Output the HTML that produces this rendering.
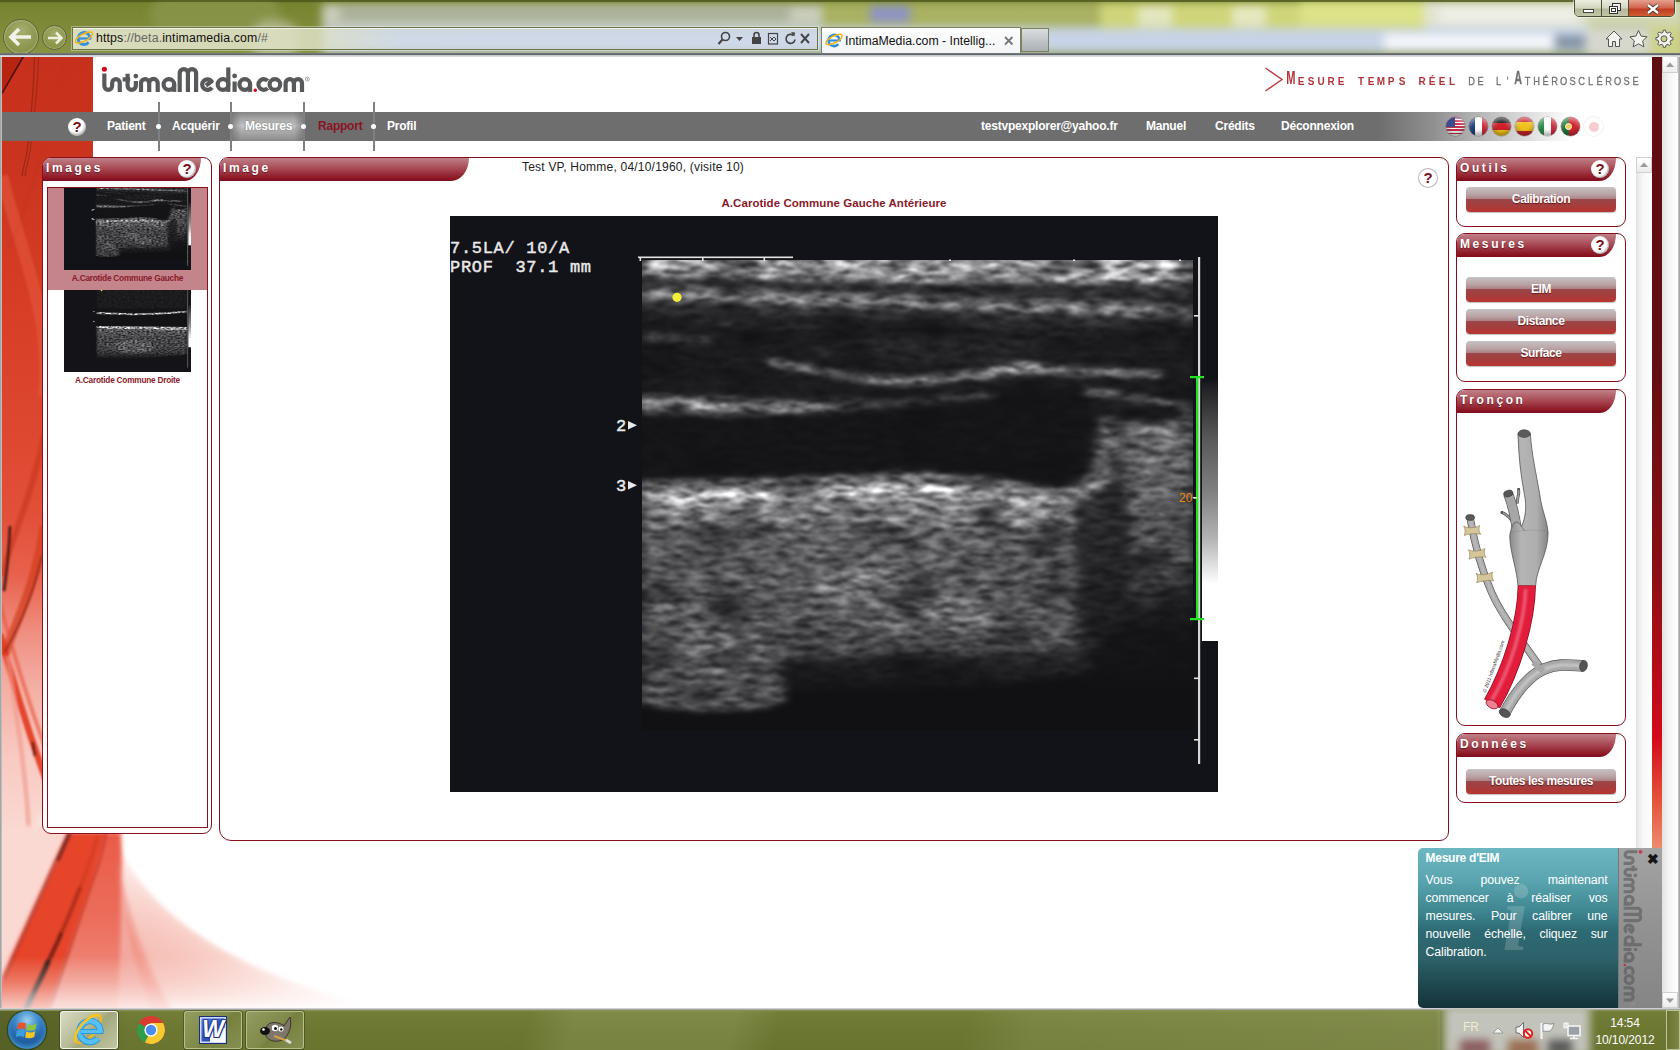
<!DOCTYPE html>
<html><head><meta charset="utf-8"><title>IntimaMedia.com</title>
<style>
*{box-sizing:border-box;margin:0;padding:0}
html,body{width:1680px;height:1050px;overflow:hidden;background:#fff;font-family:"Liberation Sans",sans-serif;}
.abs{position:absolute}
#chrome{position:absolute;left:0;top:0;width:1680px;height:57px;z-index:5;overflow:hidden;background:#7d8838}
#page{position:absolute;left:2px;top:56px;width:1660px;height:952px;overflow:hidden;background:#fff}
#taskbar{position:absolute;left:0;top:1008px;width:1680px;height:42px;overflow:hidden;background:#6b7530}
/* panels */
.panel{position:absolute;border:1.2px solid #86101c;border-radius:9px;background:#fff}
.phead{position:absolute;left:0;top:0;height:23px;background:linear-gradient(#bf8188 0%,#a84a55 45%,#8a1422 90%,#7e0f1c 100%);border-radius:8px 0 16px 0/8px 0 23px 0;color:#fff;font-weight:bold;font-size:12px;letter-spacing:2.6px;line-height:20px;padding-left:3px;text-shadow:0 1px 1px rgba(60,0,0,.5)}
.help{position:absolute;width:18px;height:18px;border-radius:50%;background:#fff;box-shadow:inset -1px -1px 2px rgba(0,0,0,.35);color:#7d0c16;font-weight:bold;font-size:15px;line-height:18px;text-align:center;letter-spacing:0;text-shadow:none}
.btn{position:absolute;left:9px;width:150px;height:25px;border-radius:4px;background:linear-gradient(#c6c2c2 0%,#b9a3a5 30%,#ab7e82 49%,#9a4648 50%,#a63d3d 75%,#b93430 100%);color:#fff;font-weight:bold;font-size:12px;line-height:25px;text-align:center;letter-spacing:-.4px;text-shadow:0 1px 1px rgba(60,0,0,.6);box-shadow:0 1px 1px rgba(0,0,0,.25)}
.nav{position:absolute;top:0;color:#fff;font-weight:bold;font-size:12px;line-height:29px;white-space:nowrap;letter-spacing:-.22px}
.flag{position:absolute;top:1.2px;width:19px;height:19px;margin-left:.5px;border-radius:50%;overflow:hidden;box-shadow:inset 0 -3px 4px rgba(0,0,0,.35),inset 0 3px 4px rgba(255,255,255,.5),0 0 0 .5px rgba(0,0,0,.3)}
.tl{left:0;width:159px;text-align:center;font-size:8.3px;font-weight:bold;color:#8a1a2a;line-height:12px;white-space:nowrap;letter-spacing:-.25px}
#tag i{display:inline-block;text-align:center;font-style:normal;height:24px;vertical-align:top;overflow:visible}
#tag i.bg{font-size:17.9px;line-height:19.5px;font-weight:bold}
</style></head><body>

<!-- ================= BROWSER CHROME ================= -->
<div id="chrome">
<div class="abs" style="left:0;top:0;width:1680px;height:56px;background:linear-gradient(#5f6a24 0,#77842f 4px,#7f8a38 26px,#8a9446 56px)"></div>
<!-- blurred stuff behind glass -->
<div class="abs" style="left:0;top:0;width:1680px;height:56px;filter:blur(5px)">
 <div class="abs" style="left:150px;top:-6px;width:130px;height:40px;background:#8c9850;opacity:.7;border-radius:20px"></div>
 <div class="abs" style="left:250px;top:20px;width:50px;height:40px;background:#d8d8cc;opacity:.5;border-radius:20px"></div>
 <div class="abs" style="left:322px;top:4px;width:500px;height:22px;background:#c9cdbb"></div>
 <div class="abs" style="left:340px;top:8px;width:450px;height:12px;background:#9ea58e;opacity:.8"></div>
 <div class="abs" style="left:322px;top:27px;width:1270px;height:26px;background:#c7d3e6"></div>
 <div class="abs" style="left:822px;top:2px;width:300px;height:25px;background:#a9b162"></div>
 <div class="abs" style="left:1100px;top:2px;width:330px;height:26px;background:#cfd57a"></div><div class="abs" style="left:1300px;top:0px;width:130px;height:26px;background:#dce288"></div><div class="abs" style="left:1424px;top:0px;width:166px;height:27px;background:#e2e4d2"></div>
 <div class="abs" style="left:1232px;top:6px;width:34px;height:20px;background:#e6e8c0"></div>
 <div class="abs" style="left:1440px;top:7px;width:135px;height:16px;background:#eeefe6"></div>
 <div class="abs" style="left:870px;top:6px;width:40px;height:16px;background:#8d93c8"></div>
 <div class="abs" style="left:1138px;top:6px;width:34px;height:20px;background:#e3e6c0"></div>
 <div class="abs" style="left:1586px;top:27px;width:66px;height:30px;background:#d6d8ce"></div><div class="abs" style="left:1650px;top:20px;width:36px;height:40px;background:#ccd18a"></div><div class="abs" style="left:1586px;top:-4px;width:100px;height:30px;background:#d3d7b4"></div>
 <div class="abs" style="left:1384px;top:34px;width:170px;height:16px;background:#f4f6fa"></div>
 <div class="abs" style="left:1555px;top:36px;width:30px;height:12px;background:#7e8ea0"></div>
</div>
<div class="abs" style="left:0;top:0;width:1680px;height:1.500px;background:#4d571c;opacity:.8"></div>
<!-- nav buttons -->
<div class="abs" style="left:3px;top:19px;width:36px;height:36px;border-radius:50%;border:1.5px solid #5d6436;background:radial-gradient(circle at 50% 30%,rgba(230,235,200,.38),rgba(150,160,100,.2) 70%);box-shadow:inset 0 0 2px rgba(255,255,255,.8)"></div>
<div class="abs" style="left:42px;top:25px;width:25px;height:25px;border-radius:50%;border:1.5px solid #5d6436;background:radial-gradient(circle at 50% 30%,rgba(230,235,200,.34),rgba(150,160,100,.18) 70%);box-shadow:inset 0 0 2px rgba(255,255,255,.8)"></div>
<svg class="abs" style="left:8px;top:27px" width="26" height="20" viewBox="0 0 26 20"><path d="M11 2L3 10l8 8M3.5 10H23" fill="none" stroke="#f2f2ea" stroke-width="3.6" stroke-linejoin="miter"/></svg>
<svg class="abs" style="left:46px;top:31px" width="18" height="14" viewBox="0 0 18 14"><path d="M10 1.5L15.5 7 10 12.5M15 7H2" fill="none" stroke="#eef0e0" stroke-width="2.6"/></svg>
<!-- address bar -->
<div class="abs" style="left:72px;top:27px;width:746px;height:23px;border:1px solid #6b7446;background:linear-gradient(90deg,rgba(226,228,200,.92) 0,rgba(222,225,196,.85) 240px,rgba(214,222,232,.55) 330px,rgba(214,222,236,.5) 100%);box-shadow:inset 0 1px 0 rgba(255,255,255,.7),0 0 0 1px rgba(255,255,255,.35)"></div>
<svg class="abs" style="left:75px;top:29px" width="18" height="18" viewBox="0 0 18 18"><path d="M15 9.500A6 6 0 1 0 13.600 13.400" fill="none" stroke="#2d8fe0" stroke-width="2.800"/><path d="M3.500 9.500H16.300" stroke="#2d8fe0" stroke-width="2.200"/><ellipse cx="9" cy="8.5" rx="9.5" ry="3.6" transform="rotate(-28 9 8.5)" fill="none" stroke="#f2b41c" stroke-width="1.6"/></svg>
<div class="abs" style="left:96px;top:30px;font-size:12.3px;line-height:16px;color:#111;white-space:nowrap;letter-spacing:.15px">https<span style="color:#666">://beta.</span>intimamedia.com<span style="color:#666">/#</span></div>
<!-- address bar icons -->
<svg class="abs" style="left:716px;top:29px" width="100" height="18" viewBox="0 0 100 18" fill="none" stroke="#444" stroke-width="1.6">
 <circle cx="9.5" cy="7.5" r="4"/><path d="M6.5 10.5L2.5 15" stroke-width="2.2"/>
 <path d="M20 8h7l-3.5 4z" fill="#444" stroke="none"/>
 <rect x="36" y="8" width="9" height="7" fill="#444" stroke="none"/><path d="M38 8V6a2.5 2.5 0 0 1 5 0v2"/>
 <rect x="52.5" y="4.500" width="9" height="10.500" stroke-width="1.200"/><path d="M54 8l2 2 2-2 2 2M54 12l2-2 2 2 2-2" stroke-width="1"/>
 <path d="M77.500 6.500a4.500 4.500 0 1 0 1.500 4" stroke-width="1.700"/><path d="M75 3l4 .5-.5 4z" fill="#444" stroke="none"/>
 <path d="M85 5l8 9M93 5l-8 9" stroke-width="1.900"/>
</svg>
<!-- tab -->
<div class="abs" style="left:821px;top:27px;width:200px;height:27px;border:1px solid #7b8260;border-bottom:none;background:linear-gradient(#fdfdfd,#f2f4f6)"></div>
<svg class="abs" style="left:825px;top:31px" width="18" height="18" viewBox="0 0 18 18"><path d="M14.600 9.500A5.600 5.600 0 1 0 13.300 13.100" fill="none" stroke="#2d8fe0" stroke-width="2.600"/><path d="M3.800 9.500H15.800" stroke="#2d8fe0" stroke-width="2.100"/><ellipse cx="9" cy="8.500" rx="9" ry="3.400" transform="rotate(-28 9 8.500)" fill="none" stroke="#f2b41c" stroke-width="1.500"/></svg>
<div class="abs" style="left:845px;top:33px;font-size:12.3px;line-height:16px;color:#111;white-space:nowrap;letter-spacing:0">IntimaMedia.com - Intellig...</div>
<svg class="abs" style="left:1003px;top:35px" width="12" height="12" viewBox="0 0 12 12"><path d="M2 2l7.500 7.500M9.500 2L2 9.500" stroke="#777" stroke-width="1.800"/></svg>
<div class="abs" style="left:1021px;top:28px;width:28px;height:24px;border:1px solid #7b8260;background:linear-gradient(#d9dde0,#aab0b4)"></div>
<!-- window buttons -->
<div class="abs" style="left:1574px;top:-1px;width:101px;height:18px;border:1px solid #4a4f30;border-radius:0 0 5px 5px;overflow:hidden;box-shadow:0 0 0 1px rgba(255,255,255,.5)">
 <div class="abs" style="left:0;top:0;width:27px;height:18px;background:linear-gradient(#eceee0,#d2d6be 45%,#b4b898 50%,#c6caae);border-right:1px solid #4a4f30"></div>
 <div class="abs" style="left:27px;top:0;width:27px;height:18px;background:linear-gradient(#eceee0,#d2d6be 45%,#b4b898 50%,#c6caae);border-right:1px solid #4a4f30"></div>
 <div class="abs" style="left:54px;top:0;width:47px;height:18px;background:linear-gradient(#e6a090,#d1614a 45%,#c03a20 50%,#d4683a)"></div>
 <div class="abs" style="left:8px;top:9px;width:11px;height:4px;background:#fff;border:1px solid #444"></div>
 <svg class="abs" style="left:33px;top:2px" width="14" height="13" viewBox="0 0 14 13" fill="none" stroke="#333" stroke-width="1"><rect x="4.500" y="1.500" width="8" height="7" fill="#eee"/><rect x="1.500" y="4.500" width="8" height="7" fill="#fff"/><rect x="3.500" y="6.500" width="4" height="3"/></svg>
 <svg class="abs" style="left:70px;top:3px" width="16" height="12" viewBox="0 0 16 12"><path d="M3 2l10 8M13 2L3 10" stroke="#333" stroke-width="4"/><path d="M3 2l10 8M13 2L3 10" stroke="#fff" stroke-width="2.400"/></svg>
</div>
<!-- home star gear -->
<svg class="abs" style="left:1602px;top:27px" width="76" height="24" viewBox="0 0 76 24" fill="#f4f4ee" stroke="#555" stroke-width="1">
 <path d="M4 12l8-8 8 8h-2.500v7.500h-4v-5h-3v5h-4V12z"/>
 <path d="M36.500 3.500l2.600 5.600 6 .7-4.500 4.100 1.300 6-5.400-3.100-5.400 3.100 1.300-6-4.500-4.100 6-.7z"/>
 <path d="M61.500 3l2 .2.500 2.200 1.800.8 1.900-1.200 1.500 1.500-1.200 1.900.8 1.800 2.200.5v2.100l-2.200.5-.8 1.800 1.200 1.900-1.500 1.500-1.900-1.200-1.800.8-.5 2.200h-2.100l-.5-2.200-1.800-.8-1.900 1.200-1.500-1.500 1.200-1.900-.8-1.800-2.200-.5v-2.100l2.200-.5.8-1.800-1.200-1.900 1.500-1.500 1.900 1.200 1.800-.8.500-2.200z"/><circle cx="62" cy="11.800" r="3" fill="#ccd18a"/>
</svg>
<div class="abs" style="left:0;top:53px;width:1680px;height:4px;background:linear-gradient(#7a8080,#5c6266 45%,#c4c8cc 55%,#e2e4e6)"></div>

</div>

<!-- ================= PAGE ================= -->
<div id="page">
<svg class="abs" style="left:0;top:0" width="460" height="952" viewBox="0 0 460 952">
 <defs>
  <linearGradient id="strip" x1="0" y1="0" x2="0" y2="1"><stop offset="0" stop-color="#c6301c"/><stop offset=".12" stop-color="#cb351f"/><stop offset=".25" stop-color="#d63d24"/><stop offset=".4" stop-color="#de4831"/><stop offset=".48" stop-color="#e2503a"/><stop offset=".54" stop-color="#e8614c"/><stop offset=".6" stop-color="#ef8f80"/><stop offset=".66" stop-color="#f4b0a5"/><stop offset=".73" stop-color="#f8cac2"/><stop offset=".81" stop-color="#fad9d2"/><stop offset="1" stop-color="#fbe6e1"/></linearGradient>
  <radialGradient id="fan" cx="0" cy="1" r="1" gradientTransform="translate(0 0)"><stop offset="0" stop-color="#f29c8e"/><stop offset=".5" stop-color="#f7c6bd"/><stop offset=".8" stop-color="#fdebe8"/><stop offset="1" stop-color="#fff"/></radialGradient>
  <linearGradient id="botfade" x1="0" y1="0" x2="0" y2="1"><stop offset="0" stop-color="#fff" stop-opacity="0"/><stop offset=".5" stop-color="#fff" stop-opacity=".28"/><stop offset="1" stop-color="#fff" stop-opacity=".72"/></linearGradient>
  <linearGradient id="rib2" x1="0" y1="0" x2="0" y2="1"><stop offset="0" stop-color="#ea5b47"/><stop offset=".5" stop-color="#ec6e5c"/><stop offset="1" stop-color="#f19a8e"/></linearGradient>
  <filter id="b2" x="-20%" y="-20%" width="140%" height="140%"><feGaussianBlur stdDeviation="2.2"/></filter>
  <filter id="b5" x="-20%" y="-20%" width="140%" height="140%"><feGaussianBlur stdDeviation="6"/></filter>
  <filter id="b15" x="-20%" y="-20%" width="140%" height="140%"><feGaussianBlur stdDeviation="1.500"/></filter>
  <filter id="b05" x="-20%" y="-20%" width="140%" height="140%"><feGaussianBlur stdDeviation=".5"/></filter>
  <filter id="b1" x="-20%" y="-20%" width="140%" height="140%"><feGaussianBlur stdDeviation="1"/></filter>
 </defs>
 <!-- base strip -->
 <rect x="0" y="0" width="91" height="960" fill="url(#strip)"/>
 <!-- white fan area bottom -->
 <path d="M91 700C96 800 160 900 400 952H91Z" fill="#fff"/>
 <path d="M40 760H111C125 820 180 900 380 952H40Z" fill="url(#fan)" filter="url(#b5)"/>
 <path d="M111 770C125 830 200 915 400 956H460V700H111Z" fill="#fff" filter="url(#b2)"/>
 <!-- top block streaks -->
 <path d="M0 0H21.700L0 37.400Z" fill="#b2200f" opacity=".75"/>
 <g filter="url(#b05)" fill="none">
  <path d="M21.700 0L0 37.400" stroke="#4a120a" stroke-width="1.500"/>
  <path d="M32.500 0C32 30 30 50 27 80S22 104 20 120" stroke="#a02616" stroke-width="1.300"/>
  <path d="M36.500 0C36 30 33 50 30 80S25 104 23 120" stroke="#a52a18" stroke-width="1.300"/>
 </g>
 <g filter="url(#b1)" fill="none">
  <path d="M62 0C60 40 40 110 8 190" stroke="#c2341e" stroke-width="2" opacity=".5"/>
  <path d="M0 120C20 200 50 260 42 340" stroke="#e65a40" stroke-width="12" opacity=".55"/>
  <path d="M42 380C30 440 10 480 0 520" stroke="#c7331c" stroke-width="6" opacity=".6"/>
  <path d="M42 470C34 530 12 570 2 600" stroke="#d23a20" stroke-width="9" opacity=".7"/>
  <path d="M-2 578C12 630 28 680 44 724" stroke="#e2381f" stroke-width="6.500" opacity=".9"/>
  <path d="M-2 548C12 600 28 650 44 694" stroke="#e9543c" stroke-width="4" opacity=".6"/>
  <path d="M6 600C14 660 22 700 26 760S20 860 12 920" stroke="#f09a8c" stroke-width="5" opacity=".6"/>
  <path d="M30.500 686L33 700" stroke="#5a140c" stroke-width="2.400"/>
  <path d="M8 470C7 500 4 520 2 535" stroke="#3c130c" stroke-width="2.500"/>
  <path d="M40 500C30 545 14 575 3 596" stroke="#8a2414" stroke-width="1.600"/>
  
 </g>
 <!-- bottom ribbons -->
 <g filter="url(#b2)">
  <path d="M-4 770H70L0 925L-4 930Z" fill="#fad9d2"/>
  <path d="M65.700 776L106 776L92 825L74 877L47 956H-6V932Z" fill="#e6452c"/>
  <path d="M104 776H119C122 830 118 900 116 956H47L73 877L90.500 825Z" fill="url(#rib2)"/>
  <path d="M117 800C121 840 140 900 172 956H116C119 900 120 850 117 800Z" fill="#f2a095" opacity=".75"/>
  <path d="M121 850C135 890 150 925 170 956H150C138 925 128 890 121 850Z" fill="#ee8a7e" opacity=".55"/>
 </g>
 <g filter="url(#b15)" fill="none" stroke-linecap="round">
  <path d="M66 778L2 922" stroke="#9a2414" stroke-width="2.200" opacity=".7"/>
  <path d="M68 777L56 804" stroke="#3a100a" stroke-width="2.400" opacity=".8"/>
  <path d="M95 782C90 800 82 822 78 832" stroke="#c03421" stroke-width="2.200" opacity=".7"/>
  <path d="M78 832C70 852 64 868 57 882" stroke="#8a1e12" stroke-width="2.800" opacity=".8"/>
  <path d="M59 878C54 890 49 900 45 908" stroke="#4a120c" stroke-width="3.200" opacity=".9"/>
  <path d="M46 906C42 916 38 924 34 932L24 954" stroke="#1c0a08" stroke-width="4.600"/>
  <path d="M30 940L22 958" stroke="#3a3a3a" stroke-width="6" opacity=".7"/>
  <path d="M104 778C100 800 96 812 90.500 825L73 877L48 952" stroke="#b83222" stroke-width="2" opacity=".7"/>
 </g>
<rect x="0" y="900" width="460" height="52" fill="url(#botfade)"/>
</svg>

<!-- header -->
<div class="abs" id="navbar" style="left:0;top:56px;width:1650px;height:29px;background:linear-gradient(90deg,#6e6e6f 0,#6e6e6f 1377px,#8f8f90 1430px,#c9c9c9 1500px,#fff 1570px)"></div>
<div class="abs" style="left:229px;top:56px;width:73px;height:29px;background:linear-gradient(90deg,rgba(110,110,111,.75),rgba(110,110,111,0) 14%,rgba(110,110,111,0) 86%,rgba(110,110,111,.75)),linear-gradient(#858586 0,#a9a9a9 25%,#c2c2c2 48%,#b0b0b0 62%,#8a8a8b 100%)"></div>
<div class="abs" style="left:156px;top:46px;width:2px;height:49px;background:#7f8084"></div>
<div class="abs" style="left:228px;top:46px;width:2px;height:49px;background:#7f8084"></div>
<div class="abs" style="left:301px;top:46px;width:2px;height:49px;background:#7f8084"></div>
<div class="abs" style="left:371px;top:46px;width:2px;height:49px;background:#7f8084"></div>
<div class="abs" style="left:0;top:56px;width:1650px;height:29px">
 <div class="help" style="left:66px;top:6px;box-shadow:inset -1px -2px 2px rgba(0,0,0,.3)">?</div>
 <span class="nav" style="left:105px">Patient</span>
 <span class="nav" style="left:170px">Acquérir</span>
 <span class="nav" style="left:243px;color:#fff;text-shadow:0 0 2px rgba(90,90,90,.8)">Mesures</span>
 <span class="nav" style="left:316px;color:#8a1422">Rapport</span>
 <span class="nav" style="left:385px">Profil</span>
 <i class="abs" style="left:154px;top:12px;width:5px;height:5px;border-radius:50%;background:#fff"></i>
 <i class="abs" style="left:226px;top:12px;width:5px;height:5px;border-radius:50%;background:#fff"></i>
 <i class="abs" style="left:299px;top:12px;width:5px;height:5px;border-radius:50%;background:#fff"></i>
 <i class="abs" style="left:369px;top:12px;width:5px;height:5px;border-radius:50%;background:#fff"></i>
 <span class="nav" style="left:979px">testvpexplorer@yahoo.fr</span>
 <span class="nav" style="left:1144px">Manuel</span>
 <span class="nav" style="left:1213px">Crédits</span>
 <span class="nav" style="left:1279px">Déconnexion</span>
</div>
<!-- logo -->
<svg width="0" height="0" style="position:absolute"><defs><symbol id="logo" viewBox="0 0 240 50">
 <g fill="none" stroke="#58595b" stroke-width="4.2" stroke-linecap="butt" stroke-linejoin="round">
  <path d="M14.35 15.5V27.9a3.9 3.9 0 0 0 7.8 0V25a3.8 3.8 0 0 1 7.6 0V33.9"/>
  <path d="M37.6 15.8V27.8a4.12 4.12 0 0 0 8.25 0V23M32.6 21.3H40.2"/>
  <path d="M51 33.9V25.2a4.1 4.1 0 0 1 8.2 0V33.9M59.2 25.2a4.25 4.25 0 0 1 8.5 0V33.9"/>
  <circle cx="78.9" cy="26.5" r="5.3"/><path d="M84.2 26.5V33.9"/>
  <path d="M89.7 33.9V15.2a4.1 4.1 0 0 1 8.2 0V33.9M97.9 15.2a4.1 4.1 0 0 1 8.2 0V33.9"/>
  <path d="M115.9 27.5L121.7 23.4A5.3 5.3 0 1 0 121.9 29.5"/>
  <circle cx="133" cy="26.5" r="5.3"/><path d="M138.3 9.4V33.9"/>
  <path d="M144.6 23.5V33.9"/>
  <circle cx="154.8" cy="26.5" r="5.3"/><path d="M160.1 26.5V33.9"/>
  <path d="M177.6 22.9A5.3 5.3 0 1 0 177.6 30.1"/>
  <circle cx="184.9" cy="26.5" r="5.3"/>
  <path d="M195.600 33.900V25.200a4.150 4.150 0 0 1 8.300 0V33.900M203.900 25.200a4.050 4.050 0 0 1 8.100 0V33.900"/>
 </g>
 <circle cx="45.850" cy="18.100" r="2.400" fill="#58595b"/><circle cx="144.600" cy="17.900" r="2.400" fill="#58595b"/>
 <circle cx="14.400" cy="11.300" r="2.500" fill="#d9001a"/><circle cx="165.300" cy="32.300" r="1.700" fill="#d9001a"/>
 <circle cx="217.400" cy="21.100" r="2" fill="none" stroke="#9a9a9a" stroke-width=".9"/><circle cx="217.400" cy="21.100" r=".8" fill="#9a9a9a"/>
</symbol></defs></svg>
<svg class="abs" style="left:88px;top:2px" width="240" height="50"><use href="#logo"/></svg>
<!-- tagline -->
<svg class="abs" style="left:1262px;top:10px" width="22" height="28" viewBox="0 0 22 28"><path d="M1.5 2L18 13.5L1.5 25" fill="none" stroke="#c0383c" stroke-width="1.4"/></svg>
<div class="abs" id="tag" style="left:1282.3px;top:13px;height:24px;white-space:nowrap;font-size:11.6px;line-height:24px;color:#b0343c;font-weight:bold"><span><i class="bg" style="width:11.9px;transform:scaleX(0.62)">M</i><i style="width:10.04px;transform:scaleX(0.86)">E</i><i style="width:10.04px;transform:scaleX(0.86)">S</i><i style="width:10.04px;transform:scaleX(0.86)">U</i><i style="width:10.04px;transform:scaleX(0.86)">R</i><i style="width:10.04px;transform:scaleX(0.86)">E</i><i style="width:10.04px"></i><i style="width:10.04px;transform:scaleX(0.86)">T</i><i style="width:10.04px;transform:scaleX(0.86)">E</i><i style="width:10.04px;transform:scaleX(0.86)">M</i><i style="width:10.04px;transform:scaleX(0.86)">P</i><i style="width:10.04px;transform:scaleX(0.86)">S</i><i style="width:10.04px"></i><i style="width:10.04px;transform:scaleX(0.86)">R</i><i style="width:10.04px;transform:scaleX(0.86)">É</i><i style="width:10.04px;transform:scaleX(0.86)">E</i><i style="width:10.04px;transform:scaleX(0.86)">L</i><i style="width:10.04px"></i></span><span style="color:#707070;font-weight:normal;-webkit-text-stroke:.3px #707070"><i style="width:9.05px;transform:scaleX(0.8)">D</i><i style="width:9.05px;transform:scaleX(0.8)">E</i><i style="width:9.05px"></i><i style="width:9.05px;transform:scaleX(0.8)">L</i><i style="width:9.05px;transform:scaleX(0.8)">'</i><i class="bg" style="width:10.85px;transform:scaleX(0.6)">A</i><i style="width:9.05px;transform:scaleX(0.8)">T</i><i style="width:9.05px;transform:scaleX(0.8)">H</i><i style="width:9.05px;transform:scaleX(0.8)">É</i><i style="width:9.05px;transform:scaleX(0.8)">R</i><i style="width:9.05px;transform:scaleX(0.8)">O</i><i style="width:9.05px;transform:scaleX(0.8)">S</i><i style="width:9.05px;transform:scaleX(0.8)">C</i><i style="width:9.05px;transform:scaleX(0.8)">L</i><i style="width:9.05px;transform:scaleX(0.8)">É</i><i style="width:9.05px;transform:scaleX(0.8)">R</i><i style="width:9.05px;transform:scaleX(0.8)">O</i><i style="width:9.05px;transform:scaleX(0.8)">S</i><i style="width:9.05px;transform:scaleX(0.8)">E</i></span></div>
<!-- flags -->
<div class="abs" id="flags" style="left:0;top:60px;height:20px">
 <i class="flag" style="left:1443px;background:repeating-linear-gradient(#c8304a 0,#c8304a 1.6px,#fff 1.6px,#fff 3.1px)"><b style="position:absolute;left:0;top:0;width:9px;height:10px;background:#3b4a8c"></b></i>
 <i class="flag" style="left:1466px;background:linear-gradient(90deg,#1f3f80 0 33%,#fff 33% 66%,#d42a3c 66%)"></i>
 <i class="flag" style="left:1489px;background:linear-gradient(#1a1a1a 0 34%,#d1202a 34% 66%,#f0c419 66%)"></i>
 <i class="flag" style="left:1512px;background:linear-gradient(#c8242f 0 25%,#f2c21c 25% 75%,#c8242f 75%)"></i>
 <i class="flag" style="left:1535px;background:linear-gradient(90deg,#2a9048 0 33%,#fff 33% 66%,#d42a3c 66%)"></i>
 <i class="flag" style="left:1558px;background:linear-gradient(90deg,#1f7a3a 0 40%,#d4232e 40%)"><b style="position:absolute;left:4px;top:6px;width:7px;height:7px;border-radius:50%;background:#f1d046;border:1px solid #fff"></b></i>
 <i class="flag" style="left:1581px;background:#fff;opacity:.35;box-shadow:0 0 0 1px #ddd"><b style="position:absolute;left:5px;top:5px;width:10px;height:10px;border-radius:50%;background:#e8707e"></b></i>
</div>

<!-- left panel -->
<div class="panel" style="left:40px;top:101px;width:170px;height:677px;border-radius:9px"></div>
<div class="phead" style="left:41px;top:102px;width:158px">Images<div class="help" style="left:135px;top:2px">?</div></div>
<div class="abs" style="left:45px;top:131px;width:161px;height:641px;border:1.2px solid #86101c;background:#fff;overflow:hidden">
 <div class="abs" style="left:0;top:0;width:159px;height:101.5px;background:#c3848b"></div>
 <div class="abs" style="left:16px;top:0;width:127px;height:82.5px;overflow:hidden"><svg style="position:absolute;left:0;top:-13px" width="127" height="95.25" viewBox="0 0 768 576"><use href="#usT"/></svg></div>
 <div class="abs tl" style="top:84px">A.Carotide Commune Gauche</div>
 <div class="abs" style="left:16px;top:101.5px;width:127px;height:83px;overflow:hidden"><svg style="position:absolute;left:0;top:-13px" width="127" height="95.25" viewBox="0 0 768 576"><use href="#us2"/></svg></div>
 <div class="abs tl" style="top:186px">A.Carotide Commune Droite</div>
</div>

<svg width="0" height="0" style="position:absolute">
<defs>
 <filter id="spk" x="0" y="0" width="100%" height="100%" filterUnits="objectBoundingBox" color-interpolation-filters="sRGB">
  <feGaussianBlur in="SourceGraphic" stdDeviation="4 2.4" result="b"/>
  <feTurbulence type="fractalNoise" baseFrequency="0.055 0.17" numOctaves="3" seed="7" result="t"/>
  <feColorMatrix in="t" type="matrix" values="1.7 0 0 0 -0.35  1.7 0 0 0 -0.35  1.7 0 0 0 -0.35  0 0 0 0 1" result="n"/>
  <feTurbulence type="fractalNoise" baseFrequency="0.016 0.03" numOctaves="2" seed="23" result="t2"/>
  <feColorMatrix in="t2" type="matrix" values="2.2 0 0 0 -0.1  2.2 0 0 0 -0.1  2.2 0 0 0 -0.1  0 0 0 0 1" result="n2"/>
  <feComposite in="b" in2="n2" operator="arithmetic" k1="1" k2="0" k3="0" k4="0" result="bb"/>
  <feComposite in="bb" in2="n" operator="arithmetic" k1="1.18" k2="0.28" k3="0" k4="0" result="m"/>
  <feGaussianBlur in="m" stdDeviation="1.3 0.8" result="m2"/>
  <feColorMatrix in="m2" type="matrix" values="1 0 0 0 0.066  1 0 0 0 0.068  1 0 0 0 0.08  0 0 0 0 1"/>
 </filter>
 <linearGradient id="gfade" x1="0" y1="0" x2="0" y2="1"><stop offset="0" stop-color="#7a7a7a"/><stop offset=".1" stop-color="#686868"/><stop offset=".3" stop-color="#555"/><stop offset=".65" stop-color="#4c4c4c"/><stop offset=".78" stop-color="#3a3a3a"/><stop offset=".88" stop-color="#1e1e1e"/><stop offset="1" stop-color="#000"/></linearGradient>
 <linearGradient id="gfade2" x1="0" y1="0" x2="0" y2="1"><stop offset="0" stop-color="#484848"/><stop offset=".4" stop-color="#585858"/><stop offset=".65" stop-color="#404040"/><stop offset=".82" stop-color="#1c1c1c"/><stop offset="1" stop-color="#000"/></linearGradient>
 <linearGradient id="gbase" x1="0" y1="0" x2="0" y2="1"><stop offset="0" stop-color="#0d0d0d"/><stop offset=".7" stop-color="#0b0b0b"/><stop offset=".93" stop-color="#000"/></linearGradient>
 <linearGradient id="gbar" x1="0" y1="0" x2="0" y2="1"><stop offset="0" stop-color="#121318"/><stop offset=".05" stop-color="#242428"/><stop offset=".27" stop-color="#555"/><stop offset=".55" stop-color="#808080"/><stop offset=".78" stop-color="#b4b4b4"/><stop offset="1" stop-color="#fff"/></linearGradient>
 <clipPath id="echoclip"><rect x="192" y="44" width="551" height="470"/></clipPath>
 <g id="usmap"><!--MAP-->
   <rect x="192" y="44" width="551" height="470" fill="url(#gbase)"/>
   <path d="M192 280L642 280L642 456L550 470L450 474L336 478L192 478Z" fill="url(#gfade)"/>
   <path d="M192 424L336 424L336 484L320 492L250 496L210 492L192 488Z" fill="#454545"/>
   <path d="M336 444L642 434L642 484L336 484Z" fill="#000000" opacity=".45"/>
   <path d="M662 189L743 184L743 409L700 420L637 424L637 284L648 244Z" fill="url(#gfade2)"/>
   <path d="M650 199L675 194L675 284L635 284L640 254Z" fill="#292929" opacity=".8"/>
   <path d="M624 264L662 230L682 304L678 384L650 434L628 444Z" fill="#0f0f0f" opacity=".8"/>
   <ellipse cx="575" cy="298" rx="44" ry="13" fill="#858585"/>
   <ellipse cx="410" cy="369" rx="46" ry="20" fill="#858585" opacity=".55"/>
   <ellipse cx="480" cy="399" rx="60" ry="22" fill="#808080" opacity=".5"/>
   <ellipse cx="270" cy="434" rx="50" ry="24" fill="#707070" opacity=".6"/>
   <ellipse cx="250" cy="344" rx="46" ry="20" fill="#3d3d3d" opacity=".5"/>
   <ellipse cx="350" cy="424" rx="40" ry="16" fill="#333333" opacity=".5"/>
   <ellipse cx="560" cy="354" rx="40" ry="18" fill="#424242" opacity=".45"/>
   <ellipse cx="230" cy="384" rx="30" ry="16" fill="#757575" opacity=".45"/>
   <path d="M192 40L743 40L743 67L450 66L192 61Z" fill="#9e9e9e"/>
   <path d="M643 42L737 42L737 70L643 70Z" fill="#a8a8a8"/>
   <path d="M192 61L450 66L743 68L743 84L450 74L192 68Z" fill="#262626"/>
   <path d="M192 68L380 74L550 80L743 87L743 105L550 96L380 92L192 86Z" fill="#4c4c4c"/>
   <path d="M192 76L380 82L550 88L743 94L743 99L550 93L380 87L192 81Z" fill="#949494"/>
   <path d="M192 86L380 92L550 96L743 105L743 116L550 106L380 102L192 98Z" fill="#212121"/>
   <path d="M194 117L258 122L262 128L194 124Z" fill="#424242"/>
   <path d="M250 102L370 110L370 115L250 108Z" fill="#242424"/>
   <path d="M510 106L650 114L650 119L510 112Z" fill="#1f1f1f"/>
   <ellipse cx="480" cy="134" rx="120" ry="14" fill="#161616"/>
   <path d="M320 142L390 154L451 162L510 156L580 148L640 152L710 155L710 161L640 160L580 158L510 166L451 171L390 164L320 150Z" fill="#5c5c5c"/>
   <path d="M540 150L580 146L598 149L580 155L540 159Z" fill="#a8a8a8"/>
   <path d="M415 161L480 161L480 168L415 167Z" fill="#858585"/>
   <path d="M655 153L710 156L710 160L655 158Z" fill="#8c8c8c"/>
   <path d="M635 171L680 178L736 188L736 194L680 185L635 178Z" fill="#616161"/>
   <path d="M192 178L270 180L361 184L450 182L550 177L550 181L450 189L361 200L270 201L192 199Z" fill="#3d3d3d"/>
   <path d="M192 183L270 185L361 189L400 189L361 195L270 195L192 193Z" fill="#8a8a8a"/>
   <ellipse cx="578" cy="221" rx="20" ry="5" fill="#262626"/>
   <ellipse cx="532" cy="248" rx="9" ry="3" fill="#383838"/>
   <ellipse cx="240" cy="230" rx="40" ry="4" fill="#171717"/>
   <path d="M192 204L450 194L550 184L625 176L640 182L642 204L634 236L618 262L595 269L563 262L466 252L380 256L192 261Z" fill="#050505"/>
   <ellipse cx="700" cy="197" rx="36" ry="9" fill="#080808"/>
   <ellipse cx="703" cy="216" rx="15" ry="4.5" fill="#cccccc"/>
   <path d="M654 224L743 206L743 254L662 264Z" fill="#666666" opacity=".6"/>
   <path d="M192 265L310 263L380 260L466 256L551 260L563 265L595 273L629 271L643 252L649 224L654 199L662 214L660 264L642 284L192 284Z" fill="#707070"/>
   <path d="M192 271L380 267L466 263L551 267L590 276L590 278L551 270L466 266L380 270L192 274Z" fill="#383838"/>
   <path d="M192 274L380 270L466 267L551 271L600 281L600 292L551 286L466 282L380 284L192 290Z" fill="#a8a8a8"/>
   <path d="M250 275L340 272L380 271L466 268L500 270L500 277L466 276L380 279L340 281L250 284Z" fill="#c7c7c7"/>
   <path d="M192 288L265 288L265 295L192 295Z" fill="#a8a8a8"/>
   <path d="M192 290L610 290L610 308L192 308Z" fill="#808080" opacity=".5"/>
  <!--/MAP--></g>
 <g id="usover"><!-- overlays -->
  <g fill="#e4e4e4">
   <rect x="188" y="40.5" width="155" height="1.6"/>
   <rect x="499" y="43.500" width="2" height="1.500"/><rect x="623" y="43.500" width="2" height="1.500"/><rect x="729" y="43.500" width="2" height="1.500"/><rect x="189.5" y="41" width="1.6" height="4"/><rect x="252" y="41" width="1.6" height="4"/><rect x="313.5" y="41" width="1.6" height="4"/>
   <rect x="748" y="41" width="2.2" height="507" fill="#d8d8d8"/>
   <rect x="744" y="99" width="5" height="1.6"/><rect x="744" y="461.5" width="5" height="1.6"/><rect x="744" y="523" width="5" height="1.6"/><rect x="744" y="281" width="5" height="1.6"/>
  </g>
  <rect x="752" y="163" width="16" height="205" fill="url(#gbar)"/>
  <rect x="752" y="367" width="16" height="58" fill="#fff"/>
  
  <circle cx="227" cy="81.3" r="4.6" fill="#f2ee3a"/>
  <g font-family="Liberation Mono,monospace" font-size="17" fill="#e9e9e9" stroke="#e9e9e9" stroke-width=".45" style="letter-spacing:.7px">
   <text x="0" y="37">7.5LA/ 10/A</text><text x="0" y="56">PROF&#160;&#160;37.1 mm</text>
   <text x="166" y="215">2</text><text x="166" y="275">3</text>
  </g>
  <path d="M178 205l9 4.2-9 4.2zM178 265l9 4.2-9 4.2z" fill="#e9e9e9"/>
  
 </g>
 <filter id="tblur" x="0" y="0" width="100%" height="100%" color-interpolation-filters="sRGB"><feGaussianBlur in="SourceGraphic" stdDeviation="7 4" result="b"/><feTurbulence type="fractalNoise" baseFrequency="0.07 0.12" numOctaves="1" seed="4" result="t"/><feColorMatrix in="t" type="matrix" values="2 0 0 0 -0.5  2 0 0 0 -0.5  2 0 0 0 -0.5  0 0 0 0 1" result="n"/><feComposite in="b" in2="n" operator="arithmetic" k1="0.95" k2="0.15" k3="0" k4="0" result="m"/><feColorMatrix in="m" type="matrix" values="1 0 0 0 0.066  1 0 0 0 0.068  1 0 0 0 0.08  0 0 0 0 1"/></filter>
 <symbol id="us" viewBox="0 0 768 576">
  <rect width="768" height="576" fill="#121318"/>
  <g filter="url(#spk)" clip-path="url(#echoclip)"><use href="#usmap"/></g>
  <use href="#usover"/>
  <rect x="746" y="161" width="2.4" height="242" fill="#22e322"/>
  <rect x="740" y="160" width="14" height="2.2" fill="#22e322"/><rect x="740" y="402" width="14" height="2.2" fill="#22e322"/>
  <rect x="743" y="281" width="4" height="1.4" fill="#e4e4e4"/>
  <text x="729" y="286" font-family="Liberation Sans,sans-serif" font-size="12" fill="#ea860e">20</text>
 </symbol>
 <symbol id="usT" viewBox="0 0 768 576">
  <rect width="768" height="576" fill="#121318"/>
  <g filter="url(#tblur)" clip-path="url(#echoclip)"><use href="#usmap"/></g>
  <use href="#usover"/>
 </symbol>
 <symbol id="us2" viewBox="0 0 768 576">
  <rect width="768" height="576" fill="#141318"/>
  <g filter="url(#tblur)" clip-path="url(#echoclip)">
   <rect x="192" y="44" width="551" height="470" fill="#050505"/>
   <rect x="200" y="60" width="543" height="130" fill="#111"/>
   
   <path d="M200 212L420 220L600 214L743 204V214L600 226L420 232L200 224Z" fill="#e8e8e8"/>
   <path d="M200 236H743V292H200Z" fill="#030303"/>
   <path d="M200 296L743 302V322L200 312Z" fill="#f0f0f0"/>
   <path d="M200 312L743 322V470L600 480L400 500L200 490Z" fill="url(#gfade)"/>
   <ellipse cx="420" cy="420" rx="120" ry="40" fill="#8a8a8a" opacity=".6"/>
  </g>
  <rect x="748" y="41" width="2.200" height="507" fill="#d8d8d8"/>
  <rect x="752" y="163" width="16" height="205" fill="url(#gbar)"/><rect x="752" y="367" width="16" height="58" fill="#fff"/>
  <circle cx="227" cy="81.300" r="5" fill="#f2ee3a"/>
  <path d="M178 205l9 4.200-9 4.200zM178 265l9 4.200-9 4.200z" fill="#e9e9e9"/>
 </symbol>
</defs></svg>
<!-- center panel -->
<div class="panel" style="left:217px;top:101px;width:1230px;height:684px;border-radius:9px 9px 9px 12px"></div>
<div class="phead" style="left:218px;top:102px;width:249px;border-radius:8px 0 18px 0/8px 0 23px 0">Image</div>
<div class="abs" style="left:520px;top:104px;font-size:12px;line-height:15px;color:#222;white-space:nowrap;letter-spacing:.21px">Test VP, Homme, 04/10/1960, (visite 10)</div>
<div class="abs" style="left:448px;top:140px;width:768px;text-align:center;font-size:11.5px;font-weight:bold;color:#8a1a2a;line-height:14px;letter-spacing:.05px">A.Carotide Commune Gauche Antérieure</div>
<div class="help" style="left:1417px;top:112.5px;box-shadow:0 0 0 1px #b4b4b4;color:#7d0c16">?</div>
<svg class="abs" style="left:448px;top:160px" width="768" height="576" viewBox="0 0 768 576"><use href="#us"/></svg>

<!-- right panels -->
<div class="panel" style="left:1454px;top:101px;width:170px;height:70px"></div>
<div class="phead" style="left:1455px;top:102px;width:159px">Outils<div class="help" style="left:134px;top:2px">?</div></div>
<div class="btn" style="left:1464px;top:131px">Calibration</div>

<div class="panel" style="left:1454px;top:177px;width:170px;height:149px"></div>
<div class="phead" style="left:1455px;top:178px;width:159px">Mesures<div class="help" style="left:134px;top:2px">?</div></div>
<div class="btn" style="left:1464px;top:221px">EIM</div>
<div class="btn" style="left:1464px;top:253px">Distance</div>
<div class="btn" style="left:1464px;top:285px">Surface</div>

<div class="panel" style="left:1454px;top:333px;width:170px;height:337px"></div>
<div class="phead" style="left:1455px;top:334px;width:159px">Tronçon</div>
<svg class="abs" style="left:1454px;top:359px" width="170" height="310" viewBox="0 0 576 1050">
 <defs>
  <filter id="tb" x="-10%" y="-10%" width="120%" height="120%"><feGaussianBlur stdDeviation="3"/></filter>
  <linearGradient id="bulbg" x1="0" x2="1"><stop offset="0" stop-color="#8c8c8c"/><stop offset=".3" stop-color="#b4b4b4"/><stop offset=".7" stop-color="#aeaeae"/><stop offset="1" stop-color="#868686"/></linearGradient>
 </defs>
 <g fill="none" stroke-linecap="butt" stroke-linejoin="round">
  <!-- vertebral (thin left) -->
  <path id="vert" d="M48 350C60 420 85 520 120 600S220 760 288 858" stroke="#4a4a4a" stroke-width="25"/>
  <path d="M48 350C60 420 85 520 120 600S220 760 288 858" stroke="#a6a6a6" stroke-width="21"/>
  <path d="M48 350C60 420 85 520 120 600S220 760 288 858" stroke="#c4c4c4" stroke-width="7" filter="url(#tb)"/>
  <!-- subclavian -->
  <path d="M165 1010C200 940 250 880 300 860S390 848 432 850" stroke="#4a4a4a" stroke-width="39"/>
  <path d="M165 1010C200 940 250 880 300 860S390 848 432 850" stroke="#a6a6a6" stroke-width="35"/>
  <path d="M165 1010C200 940 250 880 300 860S390 848 432 850" stroke="#c6c6c6" stroke-width="11" filter="url(#tb)"/>
  <path d="M262 838L296 868" stroke="#a6a6a6" stroke-width="20"/>
  <!-- external carotid + branches -->
  <path d="M212 250C216 270 205 285 208 300" stroke="#4a4a4a" stroke-width="10"/><path d="M212 250C216 270 205 285 208 300" stroke="#999" stroke-width="6"/>
  <path d="M155 330C170 335 180 345 192 360" stroke="#4a4a4a" stroke-width="10"/><path d="M155 330C170 335 180 345 192 360" stroke="#999" stroke-width="6"/>
  <path d="M177 268C190 300 200 340 208 400" stroke="#4a4a4a" stroke-width="34"/>
  <path d="M177 268C190 300 200 340 208 400" stroke="#a6a6a6" stroke-width="30"/>
 </g>
 <!-- internal carotid + bulb -->
 <path d="M210 64C212 130 218 200 232 270C240 310 236 345 222 378C200 340 186 380 182 410C184 470 206 520 210 578H270C272 520 312 470 312 400C308 350 292 330 284 270C270 190 256 130 252 64Z" fill="url(#bulbg)" stroke="#4a4a4a" stroke-width="2.5"/>
 <path d="M222 378L232 392" stroke="#555" stroke-width="2"/>
 <path d="M186 398C230 388 270 388 308 394" stroke="#666" stroke-width="1.2" stroke-dasharray="4 3" fill="none"/>
 <!-- red common carotid -->
 <g fill="none">
  <path d="M240 578C238 700 190 860 122 978" stroke="#8a0f22" stroke-width="62"/>
  <path d="M240 578C238 700 190 860 122 978" stroke="#e21d3c" stroke-width="57"/>
  <path d="M236 590C232 700 186 860 120 968" stroke="#f06a80" stroke-width="12" filter="url(#tb)" opacity=".8"/>
 </g>
 <ellipse cx="122" cy="980" rx="22" ry="13" transform="rotate(28 122 980)" fill="#f08094" stroke="#8a0f22" stroke-width="2.5"/>
 <!-- end caps -->
 <ellipse cx="231" cy="63" rx="21" ry="13" fill="#5a5a5a" stroke="#3a3a3a" stroke-width="2"/>
 <ellipse cx="177" cy="266" rx="16" ry="11" transform="rotate(-15 177 266)" fill="#555" stroke="#3a3a3a" stroke-width="2"/>
 <ellipse cx="48" cy="347" rx="15" ry="10" fill="#5a5a5a" stroke="#3a3a3a" stroke-width="2"/>
 <ellipse cx="432" cy="850" rx="13" ry="19" transform="rotate(12 432 850)" fill="#555" stroke="#3a3a3a" stroke-width="2"/>
 <ellipse cx="165" cy="1010" rx="20" ry="13" transform="rotate(30 165 1010)" fill="#555" stroke="#3a3a3a" stroke-width="2"/>
 <ellipse cx="212" cy="250" rx="5" ry="3" fill="#444"/><ellipse cx="155" cy="330" rx="4" ry="5" fill="#444"/>
 <!-- bones -->
 <g fill="#d6c79b" stroke="#8a7a4a" stroke-width="2">
  <path d="M26 376C40 384 64 384 80 374C76 386 78 398 84 404C66 400 42 402 28 408C32 398 32 386 26 376Z"/>
  <path d="M42 456C56 464 80 462 98 452C94 464 96 476 102 482C84 478 60 482 44 488C48 478 48 466 42 456Z"/>
  <path d="M68 536C82 544 106 542 124 532C120 544 122 556 128 562C110 558 86 562 70 568C74 558 74 546 68 536Z"/>
 </g>
 <text transform="translate(101 942) rotate(-70)" font-family="Liberation Sans,sans-serif" font-size="17" fill="#333">© 2011 IntimaMedia.com</text>
</svg>


<div class="panel" style="left:1454px;top:677px;width:170px;height:70px"></div>
<div class="phead" style="left:1455px;top:678px;width:159px">Données</div>
<div class="btn" style="left:1464px;top:713px">Toutes les mesures</div>

<!-- popup -->
<div class="abs" style="left:1416px;top:792px;width:244px;height:160px;border-radius:5px 0 0 5px;overflow:hidden">
 <div class="abs" style="left:0;top:0;width:200px;height:160px;background:linear-gradient(#6cb7c2 0,#5aa5b0 20%,#3d858f 40%,#2d6a73 52%,#2e626a 68%,#1f4950 85%,#15323a 100%)"></div>
 <div class="abs" style="left:200px;top:0;width:44px;height:160px;background:linear-gradient(#a3a3a3,#929292 50%,#858585);box-shadow:inset 1px 0 0 #6f7a7c"></div>
 <div class="abs" style="left:84px;top:22px;font-family:'Liberation Serif',serif;font-style:italic;font-weight:bold;font-size:96px;line-height:96px;color:rgba(255,255,255,.17)">i</div>
 <div class="abs" style="left:7.5px;top:2px;font-size:12px;font-weight:bold;color:#fff;line-height:16px;letter-spacing:-.25px">Mesure d'EIM</div>
 <div class="abs" id="ptxt" style="left:7.5px;top:23px;width:182px;font-size:12.3px;color:#fff;line-height:18px;text-align:justify;letter-spacing:-.1px">Vous pouvez maintenant commencer à réaliser vos mesures. Pour calibrer une nouvelle échelle, cliquez sur Calibration.</div>
 <svg class="abs" style="left:200px;top:0;transform-origin:0 0;transform:translate(31px,-7px) rotate(90deg)" width="180" height="37.5" opacity=".62"><use href="#logo"/></svg>
 <div class="abs" style="left:229px;top:3px;font-size:14px;line-height:16px;color:#151515;font-weight:bold">✖</div>
</div>

</div>
<!-- window borders / scrollbars -->
<!-- left window border -->
<div class="abs" style="left:0;top:56px;width:2px;height:952px;background:linear-gradient(90deg,#9a9a98,#c8c8c6)"></div>
<!-- dark red vertical bar -->
<div class="abs" style="left:1652px;top:56px;width:10px;height:792px;background:linear-gradient(#5e0d10 0,#640f12 40%,#8a0f14 65%,#d40a1a 86%,#e5533a 94%,#ec8b6e 100%)"></div>
<!-- inner scrollbar -->
<div class="abs" style="left:1636px;top:157px;width:16px;height:691px;background:linear-gradient(90deg,#e4e4e4,#f6f6f6 40%,#fff)"></div>
<div class="abs" style="left:1636px;top:157px;width:16px;height:16px;border:1px solid #d0d0d0;background:linear-gradient(#fff,#ececec)"></div>
<svg class="abs" style="left:1640px;top:162px" width="8" height="6"><path d="M0 5l4-4.500 4 4.500z" fill="#9a9a9a"/></svg>
<!-- outer scrollbar -->
<div class="abs" style="left:1662px;top:56px;width:16px;height:952px;background:linear-gradient(90deg,#e2e2e2,#f4f4f4 40%,#fdfdfd)"></div>
<div class="abs" style="left:1662px;top:56px;width:16px;height:17px;border:1px solid #d0d0d0;background:linear-gradient(#fff,#ececec)"></div>
<svg class="abs" style="left:1666px;top:62px" width="8" height="6"><path d="M0 5l4-4.500 4 4.500z" fill="#9a9a9a"/></svg>
<div class="abs" style="left:1662px;top:992px;width:16px;height:16px;border:1px solid #d0d0d0;background:linear-gradient(#fff,#ececec)"></div>
<svg class="abs" style="left:1666px;top:998px" width="8" height="6"><path d="M0 .5l4 4.500 4-4.500z" fill="#9a9a9a"/></svg>
<div class="abs" style="left:1678px;top:56px;width:2px;height:952px;background:linear-gradient(90deg,#c8c8c6,#9a9a98)"></div>


<!-- ================= TASKBAR ================= -->
<div id="taskbar">
<div class="abs" style="left:0;top:0;width:1680px;height:2px;background:linear-gradient(#e4e4e4,#8f9390)"></div>
<div class="abs" style="left:0;top:2px;width:1680px;height:40px;background:linear-gradient(#8b9455 0,#727d37 2px,#6c7732 50%,#69742f 100%)"></div><div class="abs" style="left:300px;top:3px;width:1140px;height:39px;background:linear-gradient(105deg,rgba(255,255,220,0) 0,rgba(255,255,220,0) 20%,rgba(255,255,220,.1) 24%,rgba(255,255,220,.1) 38%,rgba(255,255,220,0) 42%,rgba(255,255,220,0) 58%,rgba(255,255,220,.09) 64%,rgba(255,255,220,.12) 100%)"></div><div class="abs" style="left:0;top:3px;width:140px;height:39px;background:linear-gradient(90deg,rgba(70,80,30,.55) 0,rgba(70,80,30,.5) 56px,rgba(70,80,30,0) 130px)"></div>
<div class="abs" style="left:1420px;top:2px;width:200px;height:40px;filter:blur(4px)">
 <div class="abs" style="left:24px;top:-4px;width:146px;height:50px;background:#c2c3ba"></div>
 <div class="abs" style="left:40px;top:30px;width:30px;height:14px;background:#8a5a60"></div>
 <div class="abs" style="left:88px;top:30px;width:30px;height:14px;background:#9a6a50"></div>
 <div class="abs" style="left:128px;top:30px;width:24px;height:14px;background:#555"></div>
</div>
<!-- start orb -->
<div class="abs" style="left:8px;top:3px;width:38px;height:38px;border-radius:50%;background:radial-gradient(circle at 50% 25%,#9fd0f0 0,#3a86c8 35%,#1a4f92 65%,#0e2f66 100%);box-shadow:0 0 0 1.500px rgba(30,50,20,.55),inset 0 -3px 6px rgba(90,200,255,.7)"></div>
<svg class="abs" style="left:15px;top:10px" width="24" height="24" viewBox="0 0 24 24"><path d="M3 5.500C6 4 8.500 4 11 5.500L10 11.500C7.500 10 5 10 2 11.500Z" fill="#e8542a"/><path d="M12.500 6C15 7.500 18 7.500 21.500 5.500L20.500 11.500C17.500 13 14.500 13 11.500 12Z" fill="#8cc63e"/><path d="M1.800 13C4.800 11.500 7.300 11.500 9.800 13L8.800 19C6.300 17.500 3.800 17.500.8 19Z" fill="#3b9ee0"/><path d="M11.200 13.500C14 15 17 15 20.200 13L19.200 19C16.200 20.500 13.200 20.500 10.200 19.500Z" fill="#f7c61e"/></svg>
<!-- IE active -->
<div class="abs" style="left:60px;top:3px;width:58px;height:38px;border:1px solid rgba(255,255,255,.8);border-radius:3px;background:linear-gradient(135deg,#d9dcc4 0,#b5ba93 45%,#a2a87c 55%,#c2c7a4 100%);box-shadow:0 0 0 1px rgba(50,60,20,.6)"></div>
<svg class="abs" style="left:72px;top:5px" width="34" height="34" viewBox="0 0 34 34"><g transform="rotate(-48 16 16)"><ellipse cx="16" cy="16" rx="17.500" ry="7.500" fill="none" stroke="#f0b81e" stroke-width="2.400"/></g><path d="M28.500 18.500A10.500 10.500 0 1 0 25.900 25.500" fill="none" stroke="#1f8fdc" stroke-width="6.400"/><path d="M28.500 18.500A10.500 10.500 0 1 0 25.900 25.500" fill="none" stroke="#56c0f6" stroke-width="4.600"/><path d="M8.500 18.500H31.300" stroke="#1f8fdc" stroke-width="5"/><path d="M8.500 18.500H30.500" stroke="#56c0f6" stroke-width="3.400"/><path d="M28.500 18.500A10.500 10.500 0 0 0 18 8" fill="none" stroke="#56c0f6" stroke-width="4.600"/><g transform="rotate(-48 16 16)"><path d="M-1.500 16A17.500 7.500 0 0 1 33.500 16" fill="none" stroke="#f7c325" stroke-width="2.600"/></g></svg>
<!-- chrome -->
<svg class="abs" style="left:136px;top:7px" width="30" height="30" viewBox="0 0 30 30"><circle cx="15" cy="15" r="14" fill="#db3b2f"/><path d="M15 15L2.900 8A14 14 0 0 0 9 27.600Z" fill="#2e9e4b"/><path d="M15 15L9 27.600A14 14 0 0 0 27.100 8H15Z" fill="#f7cb2f"/><path d="M15 15h12.100" stroke="#f7cb2f"/><circle cx="15" cy="15" r="6.600" fill="#fff"/><circle cx="15" cy="15" r="5.200" fill="#4a8df0"/></svg>
<!-- word -->
<div class="abs" style="left:184px;top:3px;width:58px;height:38px;border:1px solid rgba(200,205,160,.75);border-radius:3px;background:linear-gradient(135deg,#949c62 0,#7f8948 50%,#76803e 55%,#858f50 100%);box-shadow:0 0 0 1px rgba(50,60,20,.5)"></div>
<div class="abs" style="left:199px;top:8px;width:28px;height:28px;background:linear-gradient(135deg,#5a7fe0,#2c4cb0 60%,#2a46a4);border:1px solid #1c2f7a;box-shadow:inset 0 0 0 1.500px #cfd9f6"></div>
<div class="abs" style="left:210px;top:20px;width:15px;height:14px;background:linear-gradient(135deg,#e8eefc,#fff)"></div>
<div class="abs" style="left:200px;top:7px;width:26px;font-family:'Liberation Sans',sans-serif;font-weight:bold;font-style:italic;font-size:23px;line-height:28px;color:#fff;text-align:center;text-shadow:1px 1px 0 #1c2f7a,-1px -1px 0 #2a46a4,1px -1px 0 #2a46a4,-1px 1px 0 #1c2f7a">W</div>
<!-- gimp -->
<div class="abs" style="left:246px;top:3px;width:58px;height:38px;border:1px solid rgba(200,205,160,.75);border-radius:3px;background:linear-gradient(135deg,#949c62 0,#7f8948 50%,#76803e 55%,#858f50 100%);box-shadow:0 0 0 1px rgba(50,60,20,.5)"></div>
<svg class="abs" style="left:258px;top:6px" width="36" height="32" viewBox="0 0 36 32"><path d="M8 14C10 6 22 8 26 12L32 3C34 10 32 22 24 26C16 29 10 26 8 22Z" fill="#7d766a" stroke="#3a352d" stroke-width="1"/><ellipse cx="7" cy="17" rx="5" ry="4" fill="#111"/><circle cx="5.500" cy="15.500" r="1.300" fill="#fff"/><circle cx="17" cy="14" r="3.200" fill="#fff"/><circle cx="17.500" cy="14.500" r="1.500" fill="#111"/><circle cx="23" cy="15" r="2.600" fill="#fff"/><circle cx="23.300" cy="15.500" r="1.200" fill="#111"/><path d="M16 22l14 5" stroke="#d9a04a" stroke-width="2"/><path d="M28 26l5 3" stroke="#ddd" stroke-width="3"/></svg>
<!-- tray -->
<div class="abs" style="left:1463px;top:12px;font-size:12px;line-height:14px;color:#f2ecd2">FR</div>
<svg class="abs" style="left:1492px;top:10px" width="90" height="24" viewBox="0 0 90 24"><path d="M1 15l5-5 5 5z" fill="#f4f4f4" stroke="#777" stroke-width=".6"/>
 <path d="M24 9h3l4.500-4.500v15L27 15h-3z" fill="#f4f4f4" stroke="#555" stroke-width=".8"/><circle cx="36" cy="15.500" r="4.200" fill="#fff" stroke="#e0201a" stroke-width="2"/><path d="M33 12.500l6 6" stroke="#e0201a" stroke-width="2"/>
 <path d="M49.500 5v16" stroke="#f4f4f4" stroke-width="2.200"/><path d="M51 6c4-2 6 1.500 11-.5-1 3-1.500 5.500-4 7.500-3 1-4.500-.5-7 .5z" fill="#f4f4f4" stroke="#666" stroke-width=".6"/>
 <rect x="76" y="8" width="12" height="9.500" fill="#9aa0a6" stroke="#f4f4f4" stroke-width="1.600"/><path d="M78 20.500h8M82 17.500v3" stroke="#f4f4f4" stroke-width="1.600"/><path d="M74 4v6M72 5.500h4v4h-4z" stroke="#f4f4f4" stroke-width="1.300" fill="none"/>
</svg>
<div class="abs" style="left:1590px;top:7px;width:70px;text-align:center;font-size:12px;line-height:17px;color:#fff;letter-spacing:-.1px">14:54<br>10/10/2012</div>
<div class="abs" style="left:1666px;top:2px;width:14px;height:40px;border:1px solid rgba(220,225,190,.7);background:linear-gradient(90deg,#6a7430,#7e8844)"></div>

</div>
</body></html>
